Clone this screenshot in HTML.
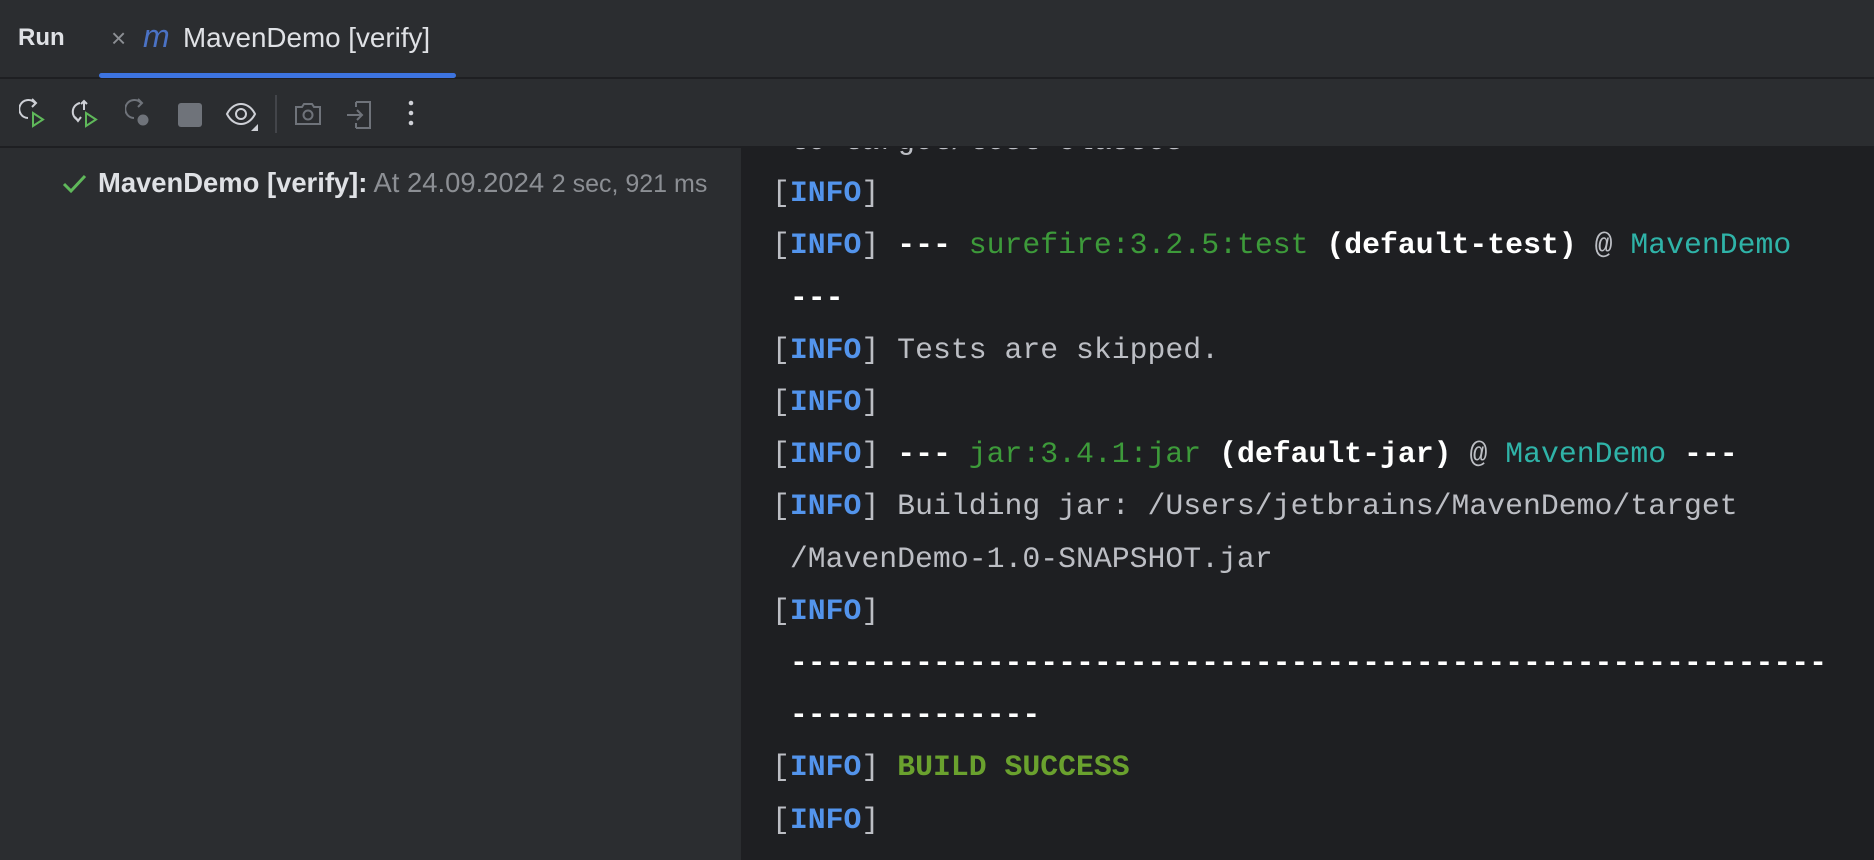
<!DOCTYPE html>
<html><head><meta charset="utf-8"><style>
*{margin:0;padding:0;box-sizing:border-box}
body{width:1874px;height:860px;background:#2b2d30;overflow:hidden;font-family:"Liberation Sans",sans-serif;position:relative}
.tabbar{position:absolute;left:0;top:0;width:1874px;height:79px;border-bottom:2px solid #1e1f22}
.run{position:absolute;left:18px;top:24px;font-size:24px;font-weight:bold;color:#dfe1e5}
.x{position:absolute;left:111px;top:23px;font-size:26px;color:#8c8f94}
.m{position:absolute;left:143px;top:18px;font-size:32px;font-style:italic;color:#4b72c4;font-family:"Liberation Sans",sans-serif}
.tab{position:absolute;left:183px;top:22px;font-size:27.8px;color:#dfe1e5}
.ul{position:absolute;left:99px;top:73px;width:357px;height:5px;background:#3d74e0;border-radius:3px}
.tools{position:absolute;left:0;top:79px;width:1874px;height:69px;border-bottom:2px solid #1e1f22}
.tools svg{position:absolute;top:19px}
.left{position:absolute;left:0;top:148px;width:741px;height:712px;background:#2b2d30}
.row{position:absolute;left:98px;top:167px;font-size:27.4px;color:#dfe1e5;white-space:nowrap}
.row .g{color:#8c8f94}
.con{position:absolute;left:741px;top:148px;width:1133px;height:712px;background:#1e1f22;overflow:hidden}
.lines{position:absolute;left:31px;top:-33px;font-family:"Liberation Mono",monospace;font-size:29.8px;line-height:52.2px;color:#bcbec4;white-space:pre}
.i{color:#5394ec;font-weight:bold}
.gr{color:#3d9a3a}
.w{color:#fff;font-weight:bold}
.t{color:#2fb3a8}
.s{color:#6aa12e;font-weight:bold}
</style></head><body>
<div class="tabbar">
<div class="run">Run</div>
<div class="x">×</div>
<div class="m">m</div>
<div class="tab">MavenDemo [verify]</div>
<div class="ul"></div>
</div>
<div class="tools">
<svg style="left:19px" width="30" height="32" viewBox="0 0 30 32"><path d="M16 5A9 9 0 1 0 9 20" fill="none" stroke="#ced0d6" stroke-width="2"/><path d="M13 1l4 4-4 4" fill="none" stroke="#ced0d6" stroke-width="2"/><path d="M14 15v13l10-6.5z" fill="none" stroke="#5fb85a" stroke-width="2"/></svg>
<svg style="left:70px" width="32" height="32" viewBox="0 0 32 32"><path d="M10 5A9 9 0 0 0 8 22" fill="none" stroke="#ced0d6" stroke-width="2"/><path d="M5 19l3 4 3-4" fill="none" stroke="#ced0d6" stroke-width="2"/><path d="M14 12V3M11 6l3-3 3 3" fill="none" stroke="#ced0d6" stroke-width="2"/><path d="M16 15v13l10-6.5z" fill="none" stroke="#5fb85a" stroke-width="2"/></svg>
<svg style="left:125px" width="30" height="32" viewBox="0 0 30 32"><path d="M16 5A9 9 0 1 0 9 20" fill="none" stroke="#6f737a" stroke-width="2"/><path d="M13 1l4 4-4 4" fill="none" stroke="#6f737a" stroke-width="2"/><circle cx="18" cy="22" r="5.5" fill="#6f737a"/></svg>
<svg style="left:177px" width="30" height="32" viewBox="0 0 30 32"><rect x="1" y="5" width="24" height="24" rx="3" fill="#6f737a"/></svg>
<svg style="left:225px" width="36" height="36" viewBox="0 0 36 36"><path d="M2 16c4-8 10-10 14-10s10 2 14 10c-4 8-10 10-14 10S6 24 2 16z" fill="none" stroke="#ced0d6" stroke-width="2"/><circle cx="16" cy="16" r="5" fill="none" stroke="#ced0d6" stroke-width="2"/><path d="M33 26v7h-7z" fill="#ced0d6"/></svg>
<div style="position:absolute;left:275px;top:16px;width:2px;height:38px;background:#43454a"></div>
<svg style="left:293px" width="32" height="32" viewBox="0 0 32 32"><path d="M3 9h6l2-3h8l2 3h6v17H3z" fill="none" stroke="#6f737a" stroke-width="2"/><circle cx="15" cy="17" r="4.5" fill="none" stroke="#6f737a" stroke-width="2"/></svg>
<svg style="left:346px" width="32" height="34" viewBox="0 0 32 34"><path d="M10 4h14v26H10M10 9V4M10 30v-5" fill="none" stroke="#6f737a" stroke-width="2"/><path d="M1 17h15M11 12l5 5-5 5" fill="none" stroke="#6f737a" stroke-width="2"/></svg>
<svg style="left:404px" width="14" height="32" viewBox="0 0 14 32"><circle cx="7" cy="5" r="2.3" fill="#ced0d6"/><circle cx="7" cy="15" r="2.3" fill="#ced0d6"/><circle cx="7" cy="25" r="2.3" fill="#ced0d6"/></svg>
</div>
<div class="left"></div>
<svg style="position:absolute;left:62px;top:173px" width="26" height="22" viewBox="0 0 26 22"><path d="M2 11l7 7L23 3" fill="none" stroke="#5fb85a" stroke-width="3"/></svg>
<div class="row"><b>MavenDemo [verify]:</b> <span class="g">At 24.09.2024</span> <span class="g" style="font-size:25px">2 sec, 921 ms</span></div>
<div class="con"><div class="lines"> to target/test-classes
[<span class="i">INFO</span>]
[<span class="i">INFO</span>] <span class="w">---</span> <span class="gr">surefire:3.2.5:test</span> <span class="w">(default-test)</span> @ <span class="t">MavenDemo</span>
 <span class="w">---</span>
[<span class="i">INFO</span>] Tests are skipped.
[<span class="i">INFO</span>]
[<span class="i">INFO</span>] <span class="w">---</span> <span class="gr">jar:3.4.1:jar</span> <span class="w">(default-jar)</span> @ <span class="t">MavenDemo</span> <span class="w">---</span>
[<span class="i">INFO</span>] Building jar: /Users/jetbrains/MavenDemo/target
 /MavenDemo-1.0-SNAPSHOT.jar
[<span class="i">INFO</span>]
<span class="w"> ----------------------------------------------------------</span>
<span class="w"> --------------</span>
[<span class="i">INFO</span>] <span class="s">BUILD SUCCESS</span>
[<span class="i">INFO</span>]
</div></div>
</body></html>
